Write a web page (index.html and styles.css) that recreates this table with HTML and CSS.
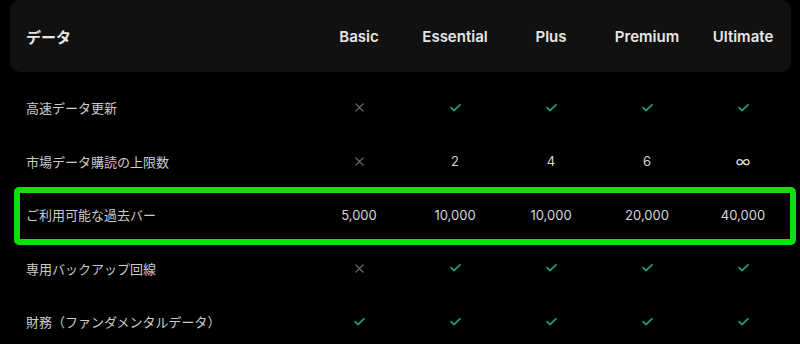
FILE: index.html
```html
<!DOCTYPE html>
<html lang="ja">
<head>
<meta charset="utf-8">
<link rel="stylesheet" href="styles.css">
</head>
<body>
<div class="table">
  <div class="head">
    <div class="label">データ</div>
    <div class="cell">Basic</div>
    <div class="cell">Essential</div>
    <div class="cell">Plus</div>
    <div class="cell">Premium</div>
    <div class="cell">Ultimate</div>
  </div>
  <div class="rows">
    <div class="row">
      <div class="label">高速データ更新</div>
      <div class="cell"><svg class="x" viewBox="0 0 10 10"><path d="M1 1L9 9M9 1L1 9"/></svg></div>
      <div class="cell"><svg class="ok" viewBox="0 0 12 9"><path d="M1 4.2L4.3 7.4L11 1"/></svg></div>
      <div class="cell"><svg class="ok" viewBox="0 0 12 9"><path d="M1 4.2L4.3 7.4L11 1"/></svg></div>
      <div class="cell"><svg class="ok" viewBox="0 0 12 9"><path d="M1 4.2L4.3 7.4L11 1"/></svg></div>
      <div class="cell"><svg class="ok" viewBox="0 0 12 9"><path d="M1 4.2L4.3 7.4L11 1"/></svg></div>
    </div>
    <div class="row">
      <div class="label">市場データ購読の上限数</div>
      <div class="cell"><svg class="x" viewBox="0 0 10 10"><path d="M1 1L9 9M9 1L1 9"/></svg></div>
      <div class="cell num">2</div>
      <div class="cell num">4</div>
      <div class="cell num">6</div>
      <div class="cell num inf">∞</div>
    </div>
    <div class="row highlight">
      <div class="label">ご利用可能な過去バー</div>
      <div class="cell num">5,000</div>
      <div class="cell num">10,000</div>
      <div class="cell num">10,000</div>
      <div class="cell num">20,000</div>
      <div class="cell num">40,000</div>
    </div>
    <div class="row">
      <div class="label">専用バックアップ回線</div>
      <div class="cell"><svg class="x" viewBox="0 0 10 10"><path d="M1 1L9 9M9 1L1 9"/></svg></div>
      <div class="cell"><svg class="ok" viewBox="0 0 12 9"><path d="M1 4.2L4.3 7.4L11 1"/></svg></div>
      <div class="cell"><svg class="ok" viewBox="0 0 12 9"><path d="M1 4.2L4.3 7.4L11 1"/></svg></div>
      <div class="cell"><svg class="ok" viewBox="0 0 12 9"><path d="M1 4.2L4.3 7.4L11 1"/></svg></div>
      <div class="cell"><svg class="ok" viewBox="0 0 12 9"><path d="M1 4.2L4.3 7.4L11 1"/></svg></div>
    </div>
    <div class="row">
      <div class="label">財務（ファンダメンタルデータ）</div>
      <div class="cell"><svg class="ok" viewBox="0 0 12 9"><path d="M1 4.2L4.3 7.4L11 1"/></svg></div>
      <div class="cell"><svg class="ok" viewBox="0 0 12 9"><path d="M1 4.2L4.3 7.4L11 1"/></svg></div>
      <div class="cell"><svg class="ok" viewBox="0 0 12 9"><path d="M1 4.2L4.3 7.4L11 1"/></svg></div>
      <div class="cell"><svg class="ok" viewBox="0 0 12 9"><path d="M1 4.2L4.3 7.4L11 1"/></svg></div>
      <div class="cell"><svg class="ok" viewBox="0 0 12 9"><path d="M1 4.2L4.3 7.4L11 1"/></svg></div>
    </div>
  </div>
</div>
</body>
</html>
```
FILE: styles.css
```css
html, body {
  margin: 0;
  padding: 0;
  background: #000;
  overflow: hidden;
}
body {
  font-family: Inter, "Noto Sans CJK JP", sans-serif;
  color: #d4d4d4;
}
.table {
  margin: 0 10px;
  width: 781px;
}
.head, .row {
  display: grid;
  grid-template-columns: 1fr repeat(5, 96px);
  align-items: center;
}
.head {
  height: 72px;
  background: #111111;
  border-radius: 10px;
  font-size: 15px;
  font-weight: 600;
  color: #e6e6e6;
}
.head .label {
  font-size: 15px;
  font-weight: 700;
}
.label {
  padding-left: 16px;
}
.cell {
  display: flex;
  justify-content: center;
  align-items: center;
}
.rows {
  padding-top: 9px;
}
.row {
  height: 53.5px;
  font-size: 13px;
  position: relative;
}
.row .label {
  color: #cbcbcb;
  font-size: 13px;
}
.num {
  color: #d6d6d6;
  font-size: 13px;
}
.inf {
  font-size: 16px;
  font-weight: 400;
}
.highlight::after {
  content: "";
  position: absolute;
  left: 4px;
  right: -5px;
  top: -1px;
  bottom: -3px;
  border: 6px solid #0ee00e;
  border-radius: 5px;
  pointer-events: none;
}
.ok {
  width: 11px;
  height: 8px;
  fill: none;
  stroke: #139e88;
  stroke-width: 2;
  stroke-linecap: round;
  stroke-linejoin: round;
}
.x {
  width: 9px;
  height: 9px;
  fill: none;
  stroke: #5e5e5e;
  stroke-width: 1.6;
  stroke-linecap: round;
}
```
